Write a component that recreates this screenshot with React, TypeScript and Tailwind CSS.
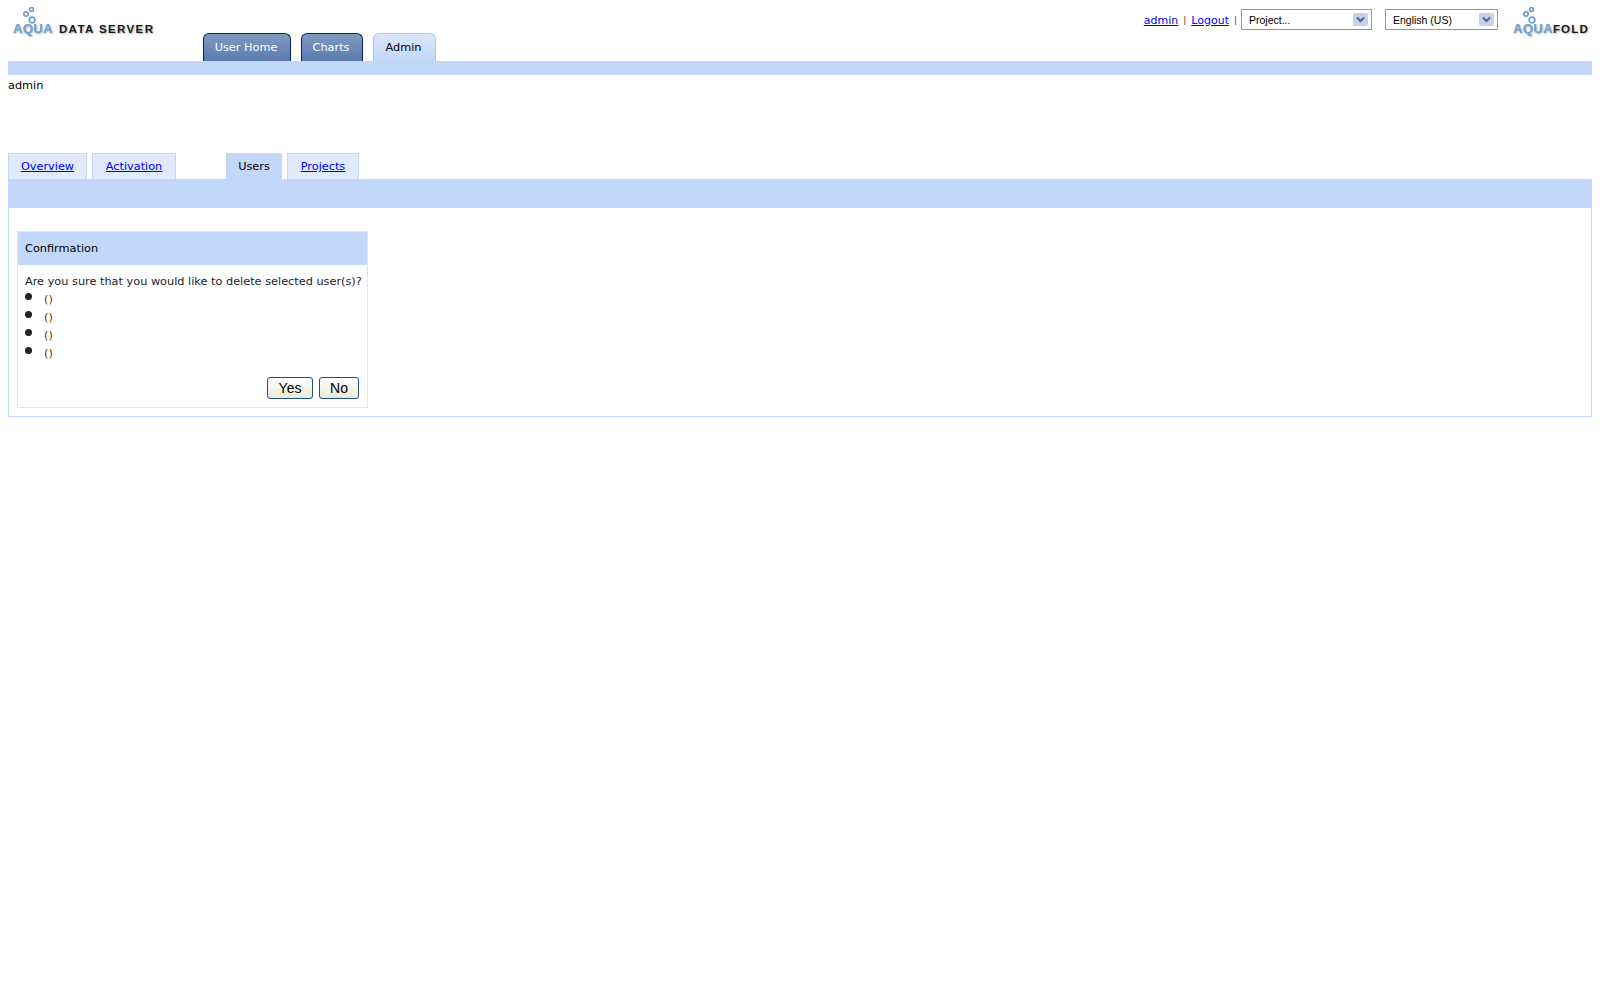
const uiFont = "font-['DejaVu_Sans',Verdana,sans-serif]";

function Bubbles({ className }: { className: string }) {
  return (
    <svg className={className} width="14" height="17" viewBox="0 0 14 17" fill="none" stroke="#6f9fd0" strokeWidth="1.7">
      <circle cx="8.5" cy="2.4" r="1.9" />
      <circle cx="3" cy="7" r="2.2" />
      <circle cx="9" cy="13" r="2.8" />
    </svg>
  );
}

function Logo({ first, second, width, gap, spacing }: { first: string; second: string; width: string; gap: string; spacing: string }) {
  return (
    <div className={`relative h-[30px] ${width} font-['Liberation_Sans',Arial,sans-serif] font-bold`}>
      <Bubbles className="absolute left-[10px] top-0" />
      <div className={`absolute left-0 top-[15px] flex items-baseline ${gap} whitespace-nowrap leading-[13px] [text-shadow:1px_1px_2px_#aaa]`}>
        <span className="text-[13px] tracking-[0.4px] text-[#6aa2d6]">{first}</span>
        <span className={`text-[11.5px] ${spacing} text-[#1a1a1a]`}>{second}</span>
      </div>
    </div>
  );
}

function Dropdown({ label, width }: { label: string; width: string }) {
  return (
    <div className={`flex h-[21px] ${width} items-center justify-between border border-[#7f9db9] bg-white pl-[7px] pr-[3px] font-['Liberation_Sans',Arial,sans-serif] text-[10.5px] text-black`}>
      <span className="pt-[1px]">{label}</span>
      <span className="flex h-[13px] w-[15px] items-center justify-center rounded-[2px] bg-[#c1d2ee]">
        <svg width="9" height="7" viewBox="0 0 9 7" fill="none" stroke="#4d6185" strokeWidth="2">
          <path d="M1 1.5 L4.5 5 L8 1.5" />
        </svg>
      </span>
    </div>
  );
}

function MainTab({ label, active, width }: { label: string; active?: boolean; width: string }) {
  return (
    <div
      className={
        active
          ? `flex h-[28px] ${width} items-center justify-center rounded-t-[6px] border border-b-0 border-[#a9c4ec] bg-gradient-to-b from-[#dbe7fb] to-[#c3d7fb] pr-[2px] text-black`
          : `flex h-[28px] ${width} items-center justify-center rounded-t-[6px] border border-b-0 border-[#0a1f6b] bg-gradient-to-b from-[#7f9ac0] to-[#5a7cae] pr-[2px] font-medium text-white`
      }
    >
      {label}
    </div>
  );
}

function SubTab({ label, width }: { label: string; width: string }) {
  return (
    <a href="#" className={`flex h-[26px] ${width} items-center justify-center border border-b-0 border-[#c3d7fb] bg-[#dfeafd] text-[#0000ee] underline`}>
      {label}
    </a>
  );
}

export default function App() {
  return (
    <div className={`min-h-screen bg-white px-2 text-[11.3px] leading-[15px] text-black ${uiFont}`}>
      <header className="flex h-[61px] items-start">
        <div className="flex h-full w-[195px] shrink-0 pl-[5px] pt-[7px]">
          <Logo first="AQUA" second="DATA SERVER" width="w-[150px]" gap="gap-[6px]" spacing="tracking-[1.4px]" />
        </div>
        <nav className="flex items-end gap-[10px] self-end">
          <MainTab label="User Home" width="w-[88px]" />
          <MainTab label="Charts" width="w-[62px]" />
          <MainTab label="Admin" active width="w-[63px]" />
        </nav>
        <div className="ml-auto flex items-start pt-[9px]">
          <div className="flex h-[22px] items-center gap-[5px] text-[#444]">
            <a href="#" className="text-[11px] text-[#0000ee] underline">admin</a>
            <span className="text-[9px]">|</span>
            <a href="#" className="text-[11px] text-[#0000ee] underline">Logout</a>
            <span className="text-[9px]">|</span>
          </div>
          <div className="ml-[4px] flex gap-[13px]">
            <Dropdown label="Project..." width="w-[131px]" />
            <Dropdown label="English (US)" width="w-[113px]" />
          </div>
          <div className="ml-[15px] mr-[2px] -mt-[2px]">
            <Logo first="AQUA" second="FOLD" width="w-[77px]" gap="gap-0" spacing="tracking-[1.2px]" />
          </div>
        </div>
      </header>

      <div className="h-[14px] bg-[#c3d7fb]" />
      <div className="pt-[3px]">admin</div>

      <div className="mt-[60px] flex gap-[5px]">
        <SubTab label="Overview" width="w-[79px]" />
        <SubTab label="Activation" width="w-[84px]" />
        <div className="ml-[45px] flex h-[26px] w-[56px] items-center justify-center bg-[#c3d7fb]">Users</div>
        <SubTab label="Projects" width="w-[72px]" />
      </div>

      <section className="h-[238px] border border-t-0 border-[#c3d7fb]">
        <div className="-ml-px -mr-px h-[29px] bg-[#c3d7fb]" />
        <div className="ml-2 mt-[23px] w-[351px] border border-[#dbe7fb]">
          <div className="flex h-[33px] items-center bg-[#c3d7fb] pl-[7px]">Confirmation</div>
          <div className="px-[7px] pt-[9px] text-[#222]">
            <p className="whitespace-nowrap">Are you sure that you would like to delete selected user(s)?</p>
            <ul className="mt-[2px]">
              {[0, 1, 2, 3].map((i) => (
                <li key={i} className="flex h-[18px] items-start">
                  <span className="mt-[2px] h-[7px] w-[7px] rounded-full bg-[#222]" />
                  <span className="ml-[12px] pt-[1px] text-[#553311]">()</span>
                </li>
              ))}
            </ul>
            <div className="mt-[14px] flex justify-end gap-[6px] pb-[8px] pr-[1px] font-['Liberation_Sans',Arial,sans-serif] text-[14px]">
              <button className="h-[22px] w-[46px] rounded-[3px] border border-[#1c5180] bg-gradient-to-b from-white to-[#ece9d8] text-black">Yes</button>
              <button className="h-[22px] w-[40px] rounded-[3px] border border-[#1c5180] bg-gradient-to-b from-white to-[#ece9d8] text-black">No</button>
            </div>
          </div>
        </div>
      </section>
    </div>
  );
}
